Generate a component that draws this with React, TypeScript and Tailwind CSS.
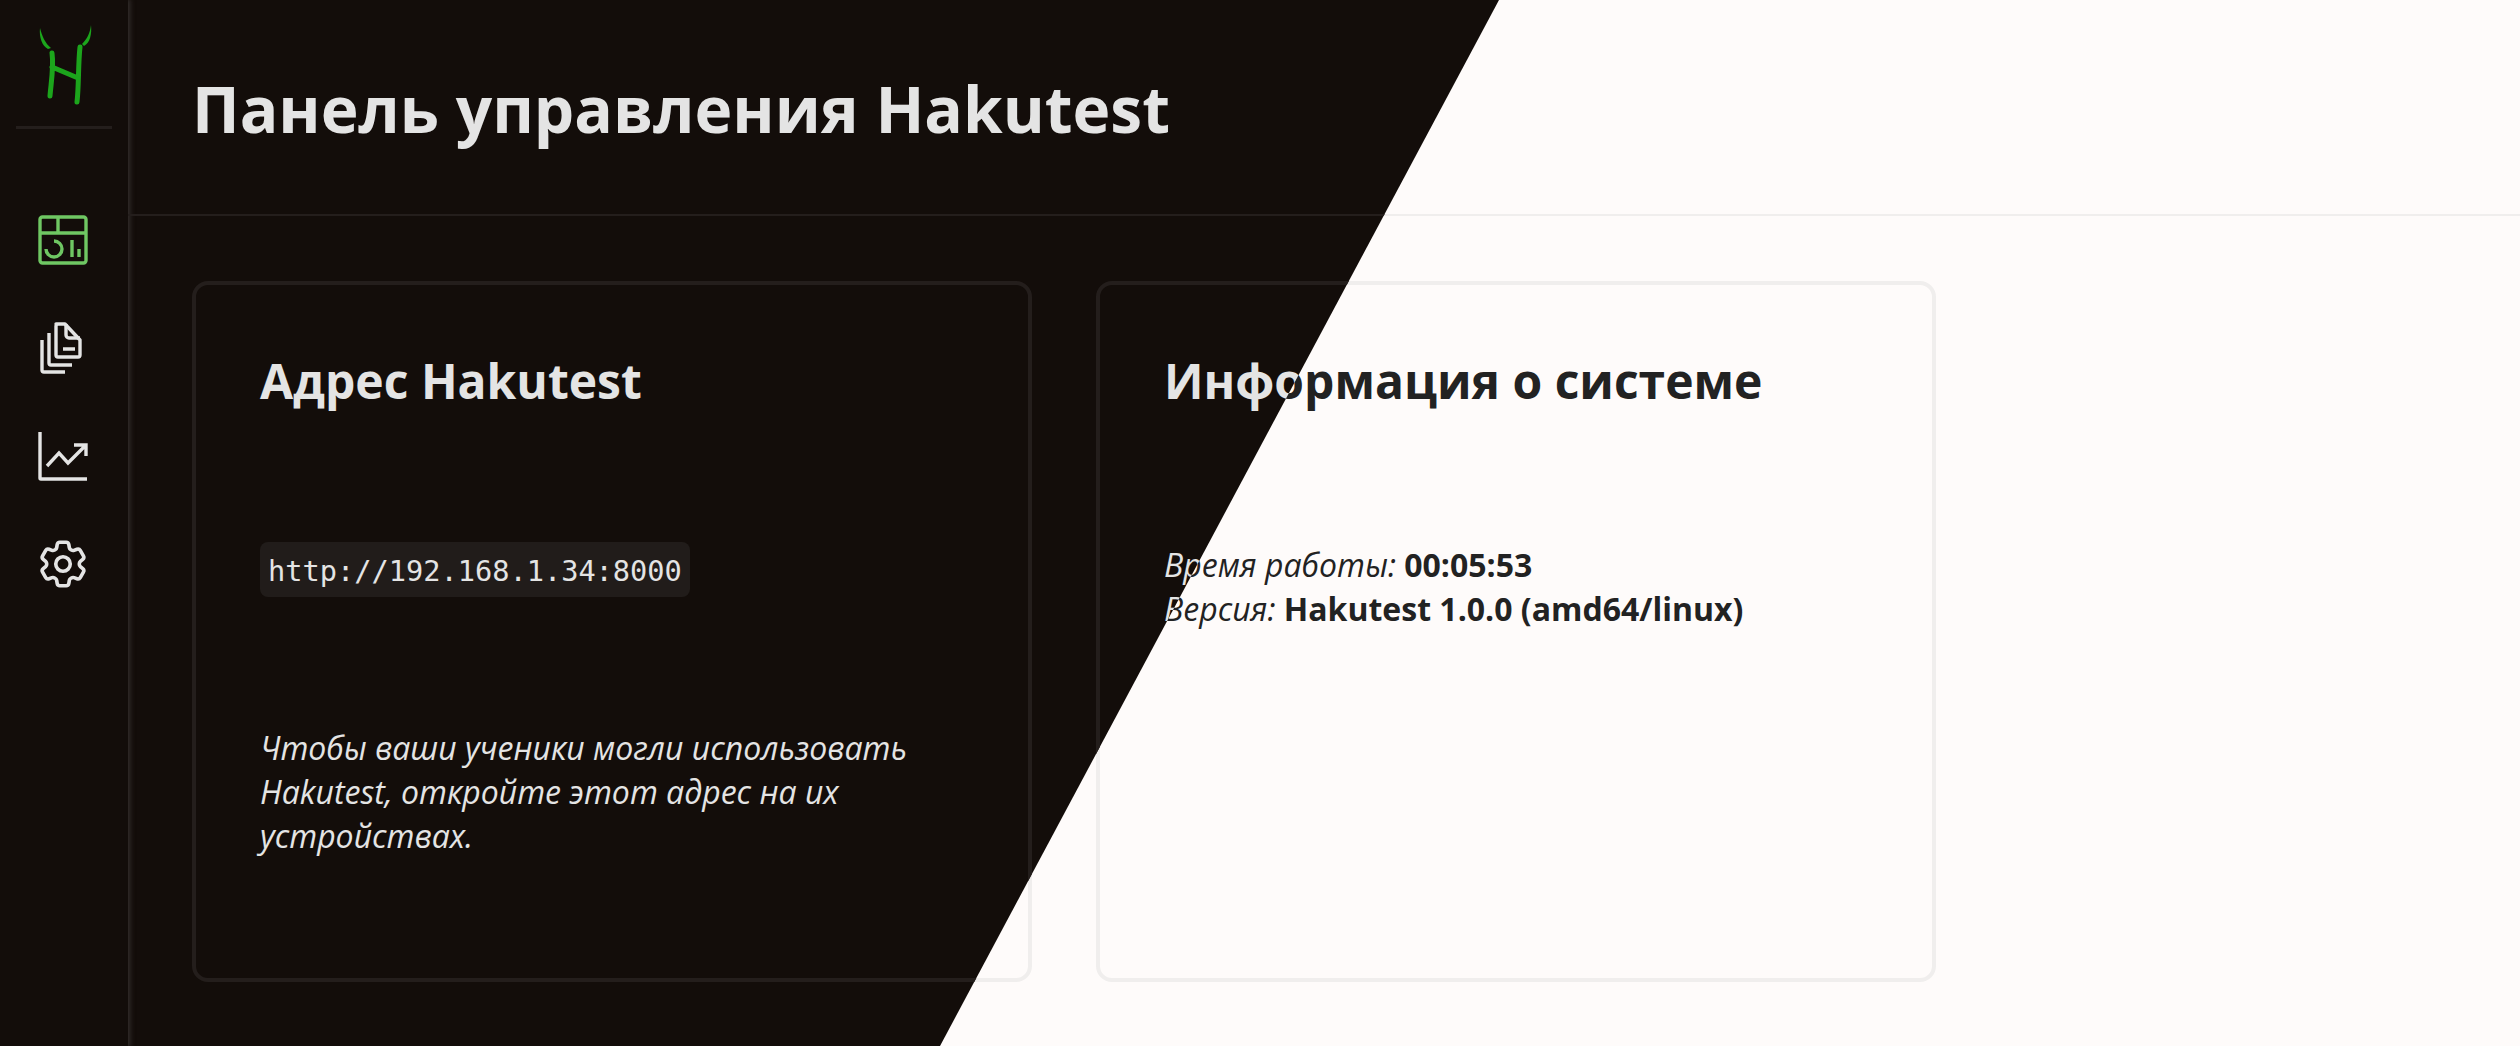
import { HiOutlineCog6Tooth } from 'react-icons/hi2'

const themes = {
  dark: {
    page: 'bg-[#130d0a] text-[#e4e4e4]',
    line: 'border-[#241e1c]',
    code: 'bg-[#211c1a]',
    strong: 'text-[#e4e4e4]',
  },
  light: {
    page: 'bg-[#fefbfa] text-[#222222]',
    line: 'border-[#f0eeed]',
    code: 'bg-[#f0eeed]',
    strong: 'text-[#222222]',
  },
}

function Logo() {
  return (
    <svg viewBox="0 0 128 126" className="h-[126px] w-[128px]" fill="#1ca51c">
      <path d="M40 28c-1 9 2 18 8 21l3-1c-6-5-9-12-11-20Z" />
      <path d="M91 25c-1 8-4 14-9 19l2 2c6-3 8-12 7-21Z" />
      <path
        d="M52 53c2 14-1 30-2 43M80 47c-2 18-1 38-3 55M52 67l26 11"
        fill="none"
        stroke="#1ca51c"
        strokeWidth="5"
        strokeLinecap="round"
      />
    </svg>
  )
}

function DashboardIcon() {
  return (
    <svg viewBox="0 0 50 50" className="h-[50px] w-[50px]" fill="none" stroke="#6fc763" strokeWidth="3.4">
      <rect x="2" y="2" width="46" height="46" rx="2.5" />
      <path d="M2 18h46M20 2v16M34 25v17M41 34v8" />
      <path d="M16 26a8 8 0 1 1-8 8" />
    </svg>
  )
}

function FilesIcon() {
  return (
    <svg viewBox="0 0 50 54" className="h-[54px] w-[50px]" fill="none" stroke="#e4e4e4" strokeWidth="3.4">
      <path d="M17 3h9l15 16v15a2 2 0 0 1-2 2H19a2 2 0 0 1-2-2V5a2 2 0 0 1 2-2Z" strokeLinejoin="round" />
      <path d="M27 3v11a3 3 0 0 0 3 3h11M24 28h12" />
      <path d="M10 12v30a2 2 0 0 0 2 2h21M3 19v30a2 2 0 0 0 2 2h21" />
    </svg>
  )
}

function ChartIcon() {
  return (
    <svg viewBox="0 0 50 50" className="h-[50px] w-[50px]" fill="none" stroke="#e4e4e4" strokeWidth="3.4">
      <path d="M2 1v46a1 1 0 0 0 1 1h46" />
      <path d="M9 35l12-13 9 10 18-18M36 14h12v11" />
    </svg>
  )
}

function Sidebar({ theme }: { theme: keyof typeof themes }) {
  let t = themes[theme]
  return (
    <aside className={`flex w-[128px] shrink-0 flex-col items-center shadow-[1px_0_5px_1px_#35302e] ${t.page}`}>
      <Logo />
      <div className="h-[3px] w-[96px] bg-[#241e1c]" />
      <nav className="mt-[57px] flex flex-col items-center">
        <a className="flex h-[108px] w-[128px] items-center justify-center pr-[2px]"><DashboardIcon /></a>
        <a className="flex h-[108px] w-[128px] items-center justify-center"><FilesIcon /></a>
        <a className="flex h-[108px] w-[128px] items-center justify-center pr-[2px]"><ChartIcon /></a>
        <a className="flex h-[108px] w-[128px] items-center justify-center pr-[2px]"><HiOutlineCog6Tooth size={58} color="#e4e4e4" /></a>
      </nav>
    </aside>
  )
}

function Dashboard({ theme }: { theme: keyof typeof themes }) {
  let t = themes[theme]
  return (
    <div className={`flex h-full font-['Open_Sans',sans-serif] ${t.page}`}>
      <Sidebar theme={theme} />
      <main className="min-w-0 flex-1">
        <header className={`flex h-[216px] items-center border-b-2 px-16 pt-[3px] ${t.line}`}>
          <h1 className="text-[64px] leading-[80px] font-bold">Панель управления Hakutest</h1>
        </header>
        <div className="flex gap-16 px-16 pt-[65px]">
          <section className={`h-[701px] w-[840px] rounded-2xl border-4 p-16 ${t.line}`}>
            <h2 className="text-[48px] leading-[64px] font-bold">Адрес Hakutest</h2>
            <div className="mt-[129px] flex">
              <code className={`rounded-[8px] px-2 pt-[7px] pb-[3px] font-['DejaVu_Sans_Mono',monospace] text-[28.65px] leading-[45px] ${t.code}`}>
                http://192.168.1.34:8000
              </code>
            </div>
            <p className="mt-[129px] text-[32px] leading-[44px] italic">
              Чтобы ваши ученики могли использовать Hakutest, откройте этот адрес на их устройствах.
            </p>
          </section>
          <section className={`h-[701px] w-[840px] rounded-2xl border-4 p-16 ${t.line}`}>
            <h2 className="text-[48px] leading-[64px] font-bold">Информация о системе</h2>
            <p className="mt-[130px] text-[32px] leading-[44px]">
              <em>Время работы:</em> <strong className={t.strong}>00:05:53</strong>
              <br />
              <em>Версия:</em> <strong className={t.strong}>Hakutest 1.0.0 (amd64/linux)</strong>
            </p>
          </section>
        </div>
      </main>
    </div>
  )
}

export default function App() {
  return (
    <div className="relative h-screen overflow-hidden">
      <Dashboard theme="light" />
      {/* theme switch wipe: the dark copy sits on top, cut along the diagonal */}
      <div className="absolute inset-0 [clip-path:polygon(0_0,1499px_0,940px_1046px,0_1046px)]">
        <Dashboard theme="dark" />
      </div>
    </div>
  )
}
